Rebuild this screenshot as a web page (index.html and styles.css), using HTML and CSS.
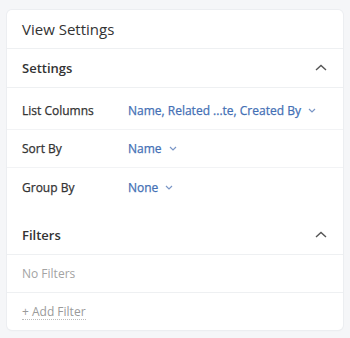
FILE: index.html
```html
<!DOCTYPE html>
<html>
<head>
<meta charset="utf-8">
<link rel="stylesheet" href="styles.css">
</head>
<body>
<div class="card">
  <div class="card-header">View Settings</div>
  <div class="section-header">
    <span>Settings</span>
    <svg class="chev-up" width="12" height="7" viewBox="0 0 12 7"><path d="M1 6 L6 1.5 L11 6" fill="none" stroke="#555" stroke-width="1.4"/></svg>
  </div>
  <div class="rows">
    <div class="row divided">
      <span class="label">List Columns</span>
      <span class="value">Name, Related ...te, Created By<svg class="chev-down" width="8" height="5" viewBox="0 0 8 5"><path d="M1 1 L4 4 L7 1" fill="none" stroke="#7a96c6" stroke-width="1.2"/></svg></span>
    </div>
    <div class="row divided">
      <span class="label">Sort By</span>
      <span class="value">Name<svg class="chev-down" width="8" height="5" viewBox="0 0 8 5"><path d="M1 1 L4 4 L7 1" fill="none" stroke="#7a96c6" stroke-width="1.2"/></svg></span>
    </div>
    <div class="row">
      <span class="label">Group By</span>
      <span class="value">None<svg class="chev-down" width="8" height="5" viewBox="0 0 8 5"><path d="M1 1 L4 4 L7 1" fill="none" stroke="#7a96c6" stroke-width="1.2"/></svg></span>
    </div>
  </div>
  <div class="section-header">
    <span>Filters</span>
    <svg class="chev-up" width="12" height="7" viewBox="0 0 12 7"><path d="M1 6 L6 1.5 L11 6" fill="none" stroke="#555" stroke-width="1.4"/></svg>
  </div>
  <div class="plain-row empty">No Filters</div>
  <div class="plain-row add"><span class="add-link">+ Add Filter</span></div>
</div>
</body>
</html>
```
FILE: styles.css
```css
html, body {
  margin: 0;
  padding: 0;
}
body {
  background: #f5f6f8;
  font-family: "Open Sans", "Noto Sans", sans-serif;
  padding: 10px 7px 9px 7px;
  width: 350px;
  box-sizing: border-box;
}
.card {
  background: #fff;
  border-radius: 5px;
  box-shadow: 0 0 0 1px #eceef1, 0 1px 2px rgba(0,0,0,0.04);
}
.card-header {
  height: 39px;
  display: flex;
  align-items: center;
  padding: 0 15px;
  font-size: 15px;
  color: #333;
  border-bottom: 1px solid #eef0f2;
  box-sizing: border-box;
}
.section-header {
  height: 39px;
  display: flex;
  align-items: center;
  justify-content: space-between;
  padding: 0 16px 0 15px;
  font-size: 13px;
  font-weight: 600;
  color: #333;
  border-bottom: 1px solid #eef0f2;
  box-sizing: border-box;
}
.section-header .chev-up {
  margin-top: -2px;
}
.rows {
  padding: 4px 0 10px 0;
}
.row {
  height: 38px;
  display: flex;
  align-items: center;
  padding: 0 15px;
  font-size: 12px;
  box-sizing: border-box;
}
.row.divided {
  border-bottom: 1px solid #f2f3f5;
}
.label {
  width: 106px;
  flex: none;
  color: #333;
  -webkit-text-stroke: 0.25px #333;
}
.value {
  color: #4470b5;
  -webkit-text-stroke: 0.25px #4470b5;
  display: flex;
  align-items: center;
  white-space: nowrap;
}
.chev-down {
  margin-left: 7px;
}
.plain-row {
  height: 38px;
  display: flex;
  align-items: center;
  padding: 0 15px;
  font-size: 12px;
  box-sizing: border-box;
}
.empty {
  color: #a3a3a3;
  border-bottom: 1px solid #eef0f2;
}
.add {
  height: 37px;
}
.add-link {
  color: #9a9a9a;
  border-bottom: 1px dotted #bbb;
  line-height: 15px;
}
```
